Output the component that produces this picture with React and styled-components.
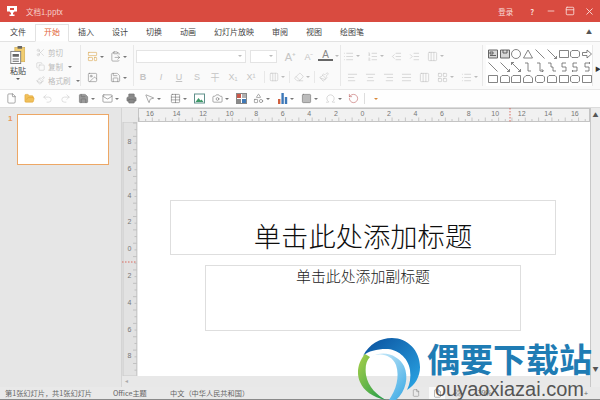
import React from 'react';
import styled, { createGlobalStyle } from 'styled-components';
import {
  File, FolderOpen, Undo2, Redo2, Save, Mail, Printer, MousePointer2, Table, Camera,
  LayoutGrid, Shapes, Square, Omega, Scissors, Copy, Paintbrush, Minus, X, List,
  ListOrdered, IndentDecrease, IndentIncrease, AlignLeft, AlignCenter, AlignRight, AlignJustify,
  Columns3, Eraser, ClipboardPaste, LayoutTemplate, RotateCcw, PanelTop, Image,
} from 'lucide-react';

const GlobalStyle = createGlobalStyle`
  html, body { margin: 0; padding: 0; overflow: hidden; background: #e6e6e6; }
  body { font-family: "Noto Sans CJK SC", "Liberation Sans", sans-serif; }
`;

const Page = styled.div`
  position: relative;
  width: 600px;
  height: 400px;
  display: flex;
  flex-direction: column;
  overflow: hidden;
`;

const TitleBar = styled.div`
  height: 22px;
  flex: none;
  background: #d94b40;
  display: flex;
  align-items: center;
  padding: 0 5px 0 7px;
  color: #f6d3cf;
  font-size: 7.5px;
`;

const DocName = styled.span`
  margin-left: 9px;
  flex: 1;
`;

const WindowButtons = styled.div`
  display: flex;
  align-items: center;
  gap: 9px;
  color: #f8dedb;
`;

const HelpMark = styled.span`
  margin: 0 3px 0 8px;
  font-weight: 700;
`;

const TabBar = styled.div`
  height: 20px;
  flex: none;
  background: #fff;
  display: flex;
  align-items: flex-end;
  padding: 0 8px 0 10px;
  gap: 18px;
  font-size: 8px;
  border-bottom: 1px solid #e2e2e2;
  box-sizing: border-box;
`;

const Tab = styled.div`
  height: 17px;
  line-height: 15px;
  position: relative;
  color: ${(p) => (p.$active ? '#e2683a' : '#444')};
`;

const TabOutline = styled.span`
  position: absolute;
  left: -9px;
  right: -9px;
  top: 0;
  bottom: -1px;
  border: 1px solid #e2e2e2;
  border-bottom: 1px solid #fafafa;
`;

const Collapse = styled.span`
  margin-left: auto;
  align-self: center;
  font-size: 6px;
  color: #555;
`;

const Ribbon = styled.div`
  height: 48px;
  flex: none;
  background: #fafafa;
  display: flex;
  border-bottom: 1px solid #e8e8e8;
  box-sizing: border-box;
  position: relative;
`;

const Group = styled.div`
  width: ${(p) => p.$w}px;
  flex: none;
  box-sizing: border-box;
  border-right: 1px solid #e8e8e8;
  margin: 3px 0;
  display: flex;
`;

const PasteColumn = styled.div`
  width: 36px;
  flex: none;
  display: flex;
  flex-direction: column;
  align-items: center;
  padding-top: 1px;
  font-size: 8px;
  color: #444;
  line-height: 10px;
  gap: 2px;
`;

const Caret = styled.span`
  display: inline-block;
  flex: none;
  width: 0;
  height: 0;
  border: 2px solid transparent;
  border-top: 2.5px solid ${(p) => p.$color || '#777'};
  border-bottom: 0;
  margin-left: ${(p) => (p.$gap === undefined ? 2 : p.$gap)}px;
`;

const ClipColumn = styled.div`
  display: flex;
  flex-direction: column;
  gap: 3px;
  padding-top: 2px;
  font-size: 7.5px;
  color: #bbb;
`;

const ClipRow = styled.div`
  height: 12px;
  display: flex;
  align-items: center;
  gap: 3px;
  white-space: nowrap;
`;

const PairGrid = styled.div`
  display: grid;
  grid-template-columns: 23px 23px;
  grid-auto-rows: 21px;
  padding: 1px 0 0 6px;
`;

const IconCell = styled.div`
  display: flex;
  align-items: center;
  color: ${(p) => p.$color || '#bdbdbd'};
  height: 100%;
`;

const Stacked = styled.div`
  flex: 1;
  display: flex;
  flex-direction: column;
  gap: 7px;
  padding-top: 4px;
`;

const ToolRow = styled.div`
  display: flex;
  align-items: center;
  height: 14px;
  gap: ${(p) => p.$gap || 0}px;
  padding-left: ${(p) => p.$pad || 0}px;
`;

const Select = styled.div`
  width: ${(p) => p.$w}px;
  height: 13px;
  box-sizing: border-box;
  border: 1px solid #e4e4e4;
  background: #fff;
  display: flex;
  align-items: center;
  justify-content: flex-end;
  padding-right: 3px;
  margin-right: 4px;
`;

const Glyph = styled.span`
  width: ${(p) => p.$w || 18}px;
  flex: none;
  text-align: center;
  font-family: "Liberation Sans", "Noto Sans CJK SC", sans-serif;
  font-size: ${(p) => p.$size || 9}px;
  font-weight: ${(p) => (p.$bold ? 700 : 400)};
  font-style: ${(p) => (p.$italic ? 'italic' : 'normal')};
  color: #c4c4c4;
  text-decoration: ${(p) => (p.$under ? 'underline' : 'none')};
`;

const ColorA = styled.span`
  width: 15px;
  flex: none;
  font-family: "Liberation Sans", sans-serif;
  font-size: 10px;
  line-height: 8px;
  color: #888;
  text-align: center;
  border-bottom: 2px solid #666;
`;

const VLine = styled.span`
  width: 1px;
  height: 12px;
  flex: none;
  background: #e8e8e8;
  margin: 0 4px;
`;

const ShapesBox = styled.div`
  width: 107px;
  flex: none;
  margin: 3px 0 3px 3px;
  background: #fff;
  display: grid;
  grid-template-columns: repeat(9, 11.8px);
  grid-auto-rows: 12.6px;
  align-items: center;
  justify-items: center;
  padding: 3px 0 0 1px;
  box-sizing: border-box;
  border-right: 1px solid #e8e8e8;
`;

const ShapesMore = styled.span`
  margin: 22px 0 0 2px;
  font-size: 6px;
  color: #333;
`;

const QuickBar = styled.div`
  height: 18px;
  flex: none;
  background: #fefefe;
  display: flex;
  align-items: center;
  padding-left: 6px;
  border-bottom: 1px solid #dcdcdc;
  box-sizing: border-box;
`;

const QuickItem = styled.div`
  width: ${(p) => p.$w}px;
  flex: none;
  display: flex;
  align-items: center;
  color: ${(p) => p.$color || '#666'};
`;

const Divider = styled.span`
  width: 1px;
  height: 11px;
  background: #ddd;
  flex: none;
  margin-right: ${(p) => p.$after}px;
`;

const Workspace = styled.div`
  flex: 1;
  min-height: 0;
  display: flex;
`;

const SlidePanel = styled.div`
  width: 122px;
  flex: none;
  background: #e6e6e6;
  border-right: 1px solid #d4d4d4;
  box-sizing: border-box;
  display: flex;
  align-items: flex-start;
  padding: 6px 0 0 8px;
  gap: 5px;
`;

const SlideNumber = styled.span`
  font-family: "Liberation Sans", sans-serif;
  font-weight: 700;
  font-size: 8px;
  line-height: 10px;
  color: #e8955a;
`;

const Thumb = styled.div`
  width: 92px;
  height: 51px;
  box-sizing: border-box;
  background: #fff;
  border: 1.5px solid #eda765;
`;

const Editor = styled.div`
  flex: 1;
  min-width: 0;
  display: grid;
  grid-template-columns: 16px 452px 1fr;
  grid-template-rows: 14px 254px 1fr;
  background: #e8e8e8;
`;

const Corner = styled.div``;

const ScrollBar = styled.div`
  grid-row: 1 / 4;
  grid-column: 3;
  border-left: 1px solid #c8c8c8;
  background: #ececec;
  font-size: 6px;
  color: #555;
  display: flex;
  flex-direction: column;
  align-items: center;
  justify-content: space-between;
  padding: 2px 0 14px;
`;

const Slide = styled.div`
  background: #fff;
  padding: 78px 0 0 32px;
  box-sizing: border-box;
  overflow: hidden;
`;

const TitleBox = styled.div`
  width: 386px;
  height: 55px;
  box-sizing: border-box;
  border: 1px solid #dedede;
  display: flex;
  align-items: flex-end;
  justify-content: center;
  padding-bottom: 1px;
  font-size: 27.3px;
  font-weight: 300;
  line-height: 36px;
  color: #0e0e0e;
`;

const SubtitleBox = styled.div`
  width: 316px;
  height: 66px;
  box-sizing: border-box;
  margin: 10px 0 0 35px;
  border: 1px solid #dedede;
  text-align: center;
  font-size: 14.9px;
  font-weight: 300;
  line-height: 20px;
  color: #222;
`;

const HScroll = styled.div`
  grid-column: 1 / 3;
  font-size: 6px;
  color: #aaa;
  padding-left: 3px;
`;

const StatusBar = styled.div`
  height: 13px;
  flex: none;
  background: #e9e9e9;
  border-bottom: 1.5px solid #8a8a8a;
  box-sizing: border-box;
  display: flex;
  align-items: center;
  padding: 0 12px 0 5px;
  font-size: 7.2px;
  color: #666;
  white-space: nowrap;
`;

const StatusText = styled.span`
  width: ${(p) => p.$w}px;
  flex: none;
`;

const StatusIcons = styled.div`
  margin-left: auto;
  display: flex;
  align-items: center;
  color: #666;
  gap: 9px;
`;

const ActiveView = styled.span`
  width: 16px;
  height: 12px;
  background: #fafafa;
  display: flex;
  align-items: center;
  justify-content: center;
`;

const ZoomLabel = styled.span`
  margin: 0 83px 0 6px;
`;

const Watermark = styled.div`
  position: absolute;
  left: 357px;
  top: 338px;
  width: 243px;
  height: 62px;
  display: flex;
`;

const WatermarkText = styled.div`
  margin-left: 6px;
  display: flex;
  flex-direction: column;
  align-items: flex-start;
`;

const BrandName = styled.div`
  font-size: 33px;
  line-height: 40px;
  font-weight: 700;
  color: #1f7cb4;
  white-space: nowrap;
  height: 42px;
`;

const BrandUrl = styled.div`
  font-family: "Liberation Sans", sans-serif;
  font-size: 20px;
  line-height: 18px;
  color: #555;
  margin-left: 8px;
`;

const ic = { strokeWidth: 1.2 };

function TrophyIcon() {
  return (
    <svg width="10" height="11" viewBox="0 0 10 11" fill="#fff">
      <path d="M0 0h10v5.5H7.5L6 7v1.5h1.5V10h-5V8.5H4V7L2.5 5.5H0z" />
      <path d="M3 2h4v2H3z" fill="#d94b40" />
    </svg>
  );
}

function PasteIcon() {
  return (
    <svg width="16" height="18" viewBox="0 0 17 20">
      <rect x="5" y="1.5" width="11" height="16" fill="#f2cd6f" stroke="#c9a54a" strokeWidth=".6" />
      <rect x="8" y="0" width="5" height="3" fill="#666" />
      <rect x="0.5" y="6" width="11" height="13.5" fill="#fff" stroke="#777" />
      <path d="M2.5 9h7v3h-7zM2.5 14h7v1h-7zM2.5 16.5h7v1h-7z" fill="#666" />
    </svg>
  );
}

function PictureIcon() {
  return (
    <svg width="11" height="11" viewBox="0 0 11 11">
      <rect x=".5" y="1" width="10" height="9" fill="#fff" stroke="#5f8f8a" />
      <path d="M1.5 9l3-4 2 2.5 1-1 2 2.5z" fill="#3f9a68" />
    </svg>
  );
}

function ColorGridIcon() {
  return (
    <svg width="11" height="11" viewBox="0 0 11 11">
      <rect x=".5" y=".5" width="10" height="10" fill="#fff" stroke="#888" />
      <path d="M1 1h4v4H1z" fill="#c9584a" />
      <path d="M6 6h4v4H6z" fill="#3f78b5" />
      <path d="M6 1h4v4H6z" fill="#b0b0b0" />
      <path d="M1 6h4v4H1z" fill="#8a8a8a" />
    </svg>
  );
}

function BarsIcon() {
  return (
    <svg width="11" height="11" viewBox="0 0 11 11">
      <path d="M1 6h2.4v5H1z" fill="#d0603f" />
      <path d="M4.4 0h2.4v11H4.4z" fill="#3d78b8" />
      <path d="M7.8 4h2.4v7H7.8z" fill="#3d78b8" />
    </svg>
  );
}

const box = 'M.5 1.5h9v7h-9z';
const round = 'M2 1.5h6l1.5 1.5v4L8 8.5H2L.5 7V3z';
const snip = 'M2 1.5h6l1.5 1.5v5.5H.5V3z';
const diag = 'M.5.5l9 9';
const diagArrow = 'M.5.5l9 9M9.5 7v2.5H7';
const shapePaths = [
  null, null, 'CIRCLE', 'M5 1l4.5 8H.5z', diag, diagArrow, box, round, 'M.5 3.5h4.5V1l4.5 4-4.5 4V6.5H.5z',
  diag, diagArrow, 'M.5.5l9 9M.5 3V.5H3M9.5 7v2.5H7', 'M2 1h3v8h3', 'M2 1h3v8h3M6.5 7l2 2-2 1', 'M1 1h3v4h2v4h3', 'M7 1H3v4h4v4H3', 'M7 1H3v4h4v4H3M2 8l1 1-1 1', 'M7 1H3v4h4v4H3M8 0l-1 1 1 1',
  box, snip, 'M2 1.5h7.5v7H.5V3z', 'M3 1.5h4l2.5 2.5v4.5H.5V4z', round, snip, box, round, box,
];

function ShapeIcon({ d, index }) {
  if (!d) {
    return (
      <svg width="10" height="10" viewBox="0 0 10 10" fill="none">
        <path d="M.5 1h9v8h-9z" stroke="#666" fill="#d8d8d8" />
        <path d={index === 0 ? 'M2 3h3v2H2zM2 6.5h6' : 'M3 1v3h4V1'} stroke="#444" strokeWidth=".8" />
      </svg>
    );
  }
  return (
    <svg width="10" height="10" viewBox="0 0 10 10" fill="none" stroke="#666" strokeWidth=".8">
      {d === 'CIRCLE' ? <circle cx="5" cy="5" r="4.5" /> : <path d={d} />}
    </svg>
  );
}

function HRuler() {
  const labels = [16, 14, 12, 10, 8, 6, 4, 2, 0, 2, 4, 6, 8, 10, 12, 14, 16];
  const ticks = Array.from({ length: 68 }, (_, i) => i * 6.66 + 1);
  return (
    <svg width="452" height="14" viewBox="0 0 452 14">
      <rect x=".5" y=".5" width="451" height="13" fill="#f1f1f1" stroke="#c4c4c4" />
      {ticks.map((x, i) => (
        <path key={i} d={`M${x} ${i % 2 ? 11 : 9.5}V13`} stroke="#aaa" strokeWidth=".6" />
      ))}
      {labels.map((n, i) => (
        <text key={i} x={12 + i * 26.55} y="8" fontSize="7" fill="#777" textAnchor="middle" fontFamily="Liberation Sans">
          {n}
        </text>
      ))}
      <path d="M372 0v14" stroke="#d94b40" strokeWidth=".8" strokeDasharray="1.5 1.5" />
    </svg>
  );
}

function VRuler() {
  const labels = [8, 6, 4, 2, 0, 2, 4, 6, 8];
  const ticks = Array.from({ length: 38 }, (_, i) => i * 6.68 + 1);
  return (
    <svg width="16" height="254" viewBox="0 0 16 254">
      <rect x="1" y="0" width="13.5" height="254" fill="#e2e2e2" stroke="#c6c6c6" strokeWidth=".8" />
      {ticks.map((y, i) => (
        <path key={i} d={`M${i % 2 ? 12.5 : 11} ${y}H14.5`} stroke="#aaa" strokeWidth=".6" />
      ))}
      {labels.map((n, i) => (
        <text key={i} x="7.5" y={22 + i * 26.8} fontSize="7" fill="#777" textAnchor="middle" fontFamily="Liberation Sans">
          {n}
        </text>
      ))}
      <path d="M0 140H15" stroke="#d94b40" strokeWidth=".8" strokeDasharray="1.5 1.5" />
    </svg>
  );
}

function SwirlLogo() {
  return (
    <svg width="64" height="62" viewBox="0 0 64 62">
      <defs>
        <linearGradient id="blueArc" x1="0" y1="0" x2="1" y2="1">
          <stop offset="0" stopColor="#0a4f9c" />
          <stop offset="1" stopColor="#2aa7e6" />
        </linearGradient>
        <linearGradient id="greenArc" x1="0" y1="0" x2="1" y2="1">
          <stop offset="0" stopColor="#a9d04a" />
          <stop offset="1" stopColor="#1f9a4a" />
        </linearGradient>
        <linearGradient id="skyArc" x1="0" y1="0" x2="1" y2="1">
          <stop offset="0" stopColor="#d8f0fb" />
          <stop offset="1" stopColor="#38a8e4" />
        </linearGradient>
      </defs>
      <path d="M6 18C12 6 23 0 35 0c16 0 28 13 28 29 0 10-5 18-13 23 3-6 4-13 3-20C51 19 40 11 29 11 20 11 11 13 6 18z" fill="url(#blueArc)" />
      <path d="M8 16C1 24-1 35 3 44c4 9 12 15 26 18-9-5-18-13-20-25-1-8 0-14 4-18z" fill="url(#greenArc)" />
      <path d="M14 19c9-5 21-2 25 8 4 12 0 25-7 35h7c10-9 13-23 8-34-5-10-20-17-33-9z" fill="url(#skyArc)" />
    </svg>
  );
}

const quickItems = [
  { w: 18, icon: <File size={11} {...ic} /> },
  { w: 18, icon: <FolderOpen size={11} {...ic} fill="#f0c05a" color="#dfa02e" /> },
  { w: 18, icon: <Undo2 size={11} {...ic} />, color: '#c8c8c8' },
  { w: 18, icon: <Redo2 size={11} {...ic} />, color: '#c8c8c8' },
  { w: 24, icon: <Save size={11} {...ic} fill="#999" />, caret: true },
  { w: 24, icon: <Mail size={11} {...ic} />, caret: true },
  { w: 18, icon: <Printer size={11} {...ic} fill="#888" /> },
  { w: 26, icon: <MousePointer2 size={11} {...ic} />, caret: true },
  { w: 24, icon: <Table size={11} {...ic} />, caret: true },
  { w: 18, icon: <PictureIcon /> },
  { w: 24, icon: <Camera size={11} {...ic} />, caret: true },
  { w: 17, icon: <ColorGridIcon /> },
  { w: 24, icon: <Shapes size={11} {...ic} />, caret: true },
  { w: 24, icon: <BarsIcon />, caret: true },
  { w: 24, icon: <Square size={11} {...ic} fill="#bbb" />, caret: true },
  { w: 23, icon: <Omega size={11} {...ic} />, color: '#bbb', caret: true },
  { w: 16, icon: <RotateCcw size={11} {...ic} color="#b55" /> },
];

export default function App() {
  return (
    <Page>
      <GlobalStyle />
      <TitleBar>
        <TrophyIcon />
        <DocName>文档1.pptx</DocName>
        <WindowButtons>
          <span>登录</span>
          <HelpMark>?</HelpMark>
          <Minus size={10} strokeWidth={2} />
          <PanelTop size={10} strokeWidth={2} />
          <X size={11} strokeWidth={2} />
        </WindowButtons>
      </TitleBar>

      <TabBar>
        <Tab>文件</Tab>
        <Tab $active><TabOutline />开始</Tab>
        <Tab>插入</Tab>
        <Tab>设计</Tab>
        <Tab>切换</Tab>
        <Tab>动画</Tab>
        <Tab>幻灯片放映</Tab>
        <Tab>审阅</Tab>
        <Tab>视图</Tab>
        <Tab>绘图笔</Tab>
        <Collapse>▲</Collapse>
      </TabBar>

      <Ribbon>
        <Group $w={81}>
          <PasteColumn>
            <PasteIcon />
            <span>粘贴</span>
            <Caret $gap={0} $color="#555" />
          </PasteColumn>
          <ClipColumn>
            <ClipRow><Scissors size={9} {...ic} />剪切</ClipRow>
            <ClipRow><Copy size={9} {...ic} />复制<Caret /></ClipRow>
            <ClipRow><Paintbrush size={9} {...ic} />格式刷<Caret /></ClipRow>
          </ClipColumn>
        </Group>
        <Group $w={53}>
          <PairGrid>
            <IconCell $color="#777"><LayoutTemplate size={11} {...ic} color="#d8a040" /><Caret /></IconCell>
            <IconCell $color="#777"><ClipboardPaste size={11} {...ic} /><Caret /></IconCell>
            <IconCell $color="#777"><Image size={11} {...ic} /></IconCell>
            <IconCell $color="#777"><Save size={11} {...ic} /><Caret /></IconCell>
          </PairGrid>
        </Group>
        <Group $w={207}>
          <Stacked>
            <ToolRow $pad={2}>
              <Select $w={110}><Caret $color="#bbb" /></Select>
              <Select $w={27}><Caret $color="#bbb" /></Select>
              <Glyph $size={11} $w={19}>A⁺</Glyph>
              <Glyph $size={9} $w={18}>A⁻</Glyph>
              <ColorA>A</ColorA>
              <Caret $color="#bbb" />
            </ToolRow>
            <ToolRow>
              <Glyph $bold>B</Glyph>
              <Glyph $italic>I</Glyph>
              <Glyph $under>U</Glyph>
              <Glyph>S</Glyph>
              <Glyph>干</Glyph>
              <Glyph>X₁</Glyph>
              <Glyph>X¹</Glyph>
              <VLine />
              <IconCell><Columns3 size={10} {...ic} /><Caret $color="#bbb" /></IconCell>
              <VLine />
              <IconCell><Eraser size={10} {...ic} /><Caret $color="#bbb" /></IconCell>
              <VLine />
              <IconCell><Paintbrush size={10} {...ic} /></IconCell>
            </ToolRow>
          </Stacked>
        </Group>
        <Group $w={142}>
          <Stacked>
            <ToolRow $pad={2} $gap={7}>
              <IconCell><List size={11} {...ic} /><Caret $color="#bbb" /></IconCell>
              <IconCell><ListOrdered size={11} {...ic} /><Caret $color="#bbb" /></IconCell>
              <IconCell><IndentDecrease size={11} {...ic} /></IconCell>
              <IconCell><IndentIncrease size={11} {...ic} /></IconCell>
              <IconCell><Columns3 size={11} {...ic} /><Caret $color="#bbb" /></IconCell>
            </ToolRow>
            <ToolRow $pad={6} $gap={7}>
              <IconCell><AlignLeft size={11} {...ic} /></IconCell>
              <IconCell><AlignCenter size={11} {...ic} /></IconCell>
              <IconCell><AlignRight size={11} {...ic} /></IconCell>
              <IconCell><AlignJustify size={11} {...ic} /></IconCell>
              <IconCell><Columns3 size={11} {...ic} /></IconCell>
              <IconCell><LayoutGrid size={11} {...ic} /><Caret $color="#bbb" /></IconCell>
              <IconCell><List size={11} {...ic} /><Caret $color="#bbb" /></IconCell>
            </ToolRow>
          </Stacked>
        </Group>
        <ShapesBox>
          {shapePaths.map((d, i) => (
            <ShapeIcon key={i} d={d} index={i} />
          ))}
        </ShapesBox>
        <ShapesMore>▶</ShapesMore>
      </Ribbon>

      <QuickBar>
        {quickItems.map((item, i) => (
          <QuickItem key={i} $w={item.w} $color={item.color}>
            {item.icon}
            {item.caret && <Caret />}
          </QuickItem>
        ))}
        <Divider $after={9} />
        <Caret $gap={0} $color="#d9893a" />
      </QuickBar>

      <Workspace>
        <SlidePanel>
          <SlideNumber>1</SlideNumber>
          <Thumb />
        </SlidePanel>
        <Editor>
          <Corner />
          <HRuler />
          <ScrollBar>
            <span>▲</span>
            <span>▼</span>
          </ScrollBar>
          <VRuler />
          <Slide>
            <TitleBox>单击此处添加标题</TitleBox>
            <SubtitleBox>单击此处添加副标题</SubtitleBox>
          </Slide>
          <HScroll>◂</HScroll>
        </Editor>
      </Workspace>

      <StatusBar>
        <StatusText $w={108}>第1张幻灯片，共1张幻灯片</StatusText>
        <StatusText $w={57}>Office主题</StatusText>
        <StatusText $w={90}>中文（中华人民共和国）</StatusText>
        <StatusIcons>
          <File size={8} {...ic} />
          <ActiveView><File size={9} {...ic} /></ActiveView>
          <LayoutGrid size={8} {...ic} />
          <ZoomLabel>39%</ZoomLabel>
          <span>+</span>
        </StatusIcons>
      </StatusBar>

      <Watermark>
        <SwirlLogo />
        <WatermarkText>
          <BrandName>偶要下载站</BrandName>
          <BrandUrl>ouyaoxiazai.com</BrandUrl>
        </WatermarkText>
      </Watermark>
    </Page>
  );
}
